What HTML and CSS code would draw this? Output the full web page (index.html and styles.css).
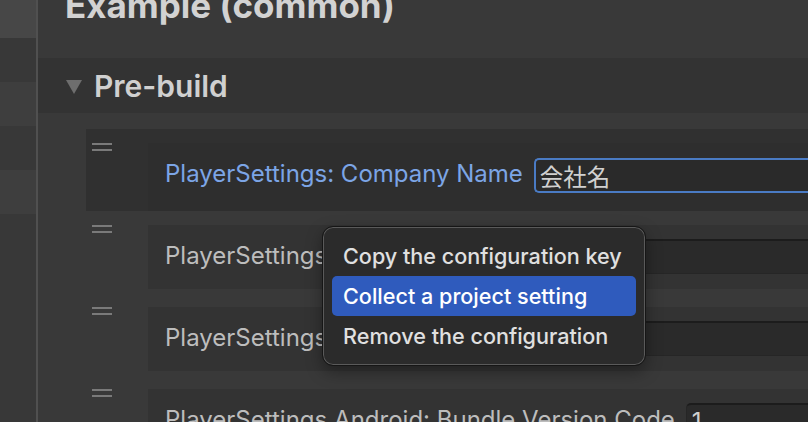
FILE: index.html
```html
<!DOCTYPE html>
<html>
<head>
<meta charset="utf-8">
<link rel="stylesheet" href="styles.css">
</head>
<body>
<div class="app">
  <aside class="sidebar">
    <div class="band band-top"></div>
    <div class="band"></div>
    <div class="band band-alt"></div>
    <div class="band"></div>
    <div class="band band-alt"></div>
  </aside>
  <main class="main">
    <h1 class="title">Example (common)</h1>
    <div class="section-header">
      <span class="triangle"></span>
      <span class="section-title">Pre-build</span>
    </div>
    <div class="list">
      <div class="row row-selected">
        <div class="handle"><span></span><span></span></div>
        <div class="item">
          <span class="label label-active">PlayerSettings: Company Name</span>
          <div class="field field-focus"><span class="field-text cjk">会社名</span></div>
        </div>
      </div>
      <div class="row">
        <div class="handle"><span></span><span></span></div>
        <div class="item">
          <span class="label">PlayerSettings: Product Name</span>
          <div class="field"><span class="field-text">Example</span></div>
        </div>
      </div>
      <div class="row">
        <div class="handle"><span></span><span></span></div>
        <div class="item">
          <span class="label">PlayerSettings: Bundle Version</span>
          <div class="field"><span class="field-text">1.0.0</span></div>
        </div>
      </div>
      <div class="row">
        <div class="handle"><span></span><span></span></div>
        <div class="item">
          <span class="label">PlayerSettings.Android: Bundle Version Code</span>
          <div class="field"><span class="field-text">1</span></div>
        </div>
      </div>
    </div>
  </main>
  <div class="menu">
    <div class="menu-item">Copy the configuration key</div>
    <div class="menu-item menu-item-active">Collect a project setting</div>
    <div class="menu-item">Remove the configuration</div>
  </div>
</div>
</body>
</html>
```
FILE: styles.css
```css
html, body {
  margin: 0;
  padding: 0;
  background: #393939;
  overflow: hidden;
}
body {
  font-family: Inter, "Noto Sans", "Noto Sans CJK JP", sans-serif;
}
.app {
  position: relative;
  display: flex;
  width: 808px;
  height: 422px;
  overflow: hidden;
}
.sidebar {
  width: 36px;
  flex: none;
  background: #383838;
  border-right: 2px solid #505050;
  display: flex;
  flex-direction: column;
}
.band {
  height: 44px;
  flex: none;
  background: #383838;
}
.band-top {
  height: 38px;
  background: #474747;
}
.band-alt {
  background: #3e3e3e;
}
.main {
  flex: 1;
  min-width: 0;
  display: flex;
  flex-direction: column;
}
.main > * {
  flex: none;
}
.title {
  margin: 0;
  height: 58px;
  box-sizing: border-box;
  padding-left: 27px;
  font-size: 35px;
  font-weight: 700;
  line-height: 10px;
  color: #d2d2d2;
  white-space: nowrap;
}
.section-header {
  height: 55px;
  background: #333333;
  display: flex;
  align-items: center;
  padding-left: 28px;
  gap: 12px;
}
.triangle {
  width: 0;
  height: 0;
  border-left: 8px solid transparent;
  border-right: 8px solid transparent;
  border-top: 14px solid #6e6e6e;
  margin-top: 2px;
}
.section-title {
  font-size: 30px;
  font-weight: 600;
  color: #d0d0d0;
}
.list {
  margin-top: 16px;
  padding-left: 48px;
  display: flex;
  flex-direction: column;
}
.row {
  height: 82px;
  display: flex;
  flex: none;
}
.row-selected {
  background: #303030;
}
.handle {
  width: 62px;
  flex: none;
  display: flex;
  flex-direction: column;
  gap: 4px;
  padding: 14px 0 0 6px;
  box-sizing: border-box;
}
.handle span {
  display: block;
  width: 20px;
  height: 2px;
  background: #7a7a7a;
}
.item {
  flex: 1;
  min-width: 0;
  margin-top: 14px;
  height: 64px;
  background: #333333;
  display: flex;
  align-items: flex-start;
  padding-left: 17px;
  gap: 11px;
  white-space: nowrap;
}
.row-selected .item {
  height: 68px;
  background: #2e2e2e;
}
.label {
  flex: none;
  font-size: 24px;
  line-height: 24px;
  margin-top: 19px;
  color: #bdbdbd;
}
.label-active {
  color: #7ca5e6;
}
.field {
  margin-top: 14px;
  height: 35px;
  flex: 1 0 300px;
  box-sizing: border-box;
  background: #2a2a2a;
  border: 1px solid #262626;
  border-top: 2px solid #1c1c1c;
  border-radius: 5px 0 0 5px;
  display: flex;
  align-items: center;
  padding-left: 5px;
}
.row-selected .field {
  margin-top: 15px;
}
.field-focus {
  border: 2px solid #4a7bc4;
  border-right: none;
  padding-left: 4px;
}
.field-text {
  font-size: 24px;
  color: #cfcfcf;
}
.cjk {
  font-family: "Noto Sans CJK JP", sans-serif;
  font-size: 23.5px;
  color: #d0d0d0;
}
.menu {
  position: absolute;
  left: 322px;
  top: 226px;
  width: 324px;
  height: 140px;
  box-sizing: border-box;
  padding: 9px 9px;
  background: #2b2b2b;
  border: 1px solid #161616;
  border-radius: 11px;
  box-shadow: inset 0 0 0 1px #5a5a5a, 0 6px 16px rgba(0, 0, 0, 0.35);
}
.menu-item {
  height: 40px;
  line-height: 40px;
  padding-left: 11px;
  font-size: 21.6px;
  font-weight: 500;
  color: #e0e0e0;
  border-radius: 5px;
  white-space: nowrap;
}
.menu-item-active {
  background: #2f5bbd;
  color: #ffffff;
}
```
